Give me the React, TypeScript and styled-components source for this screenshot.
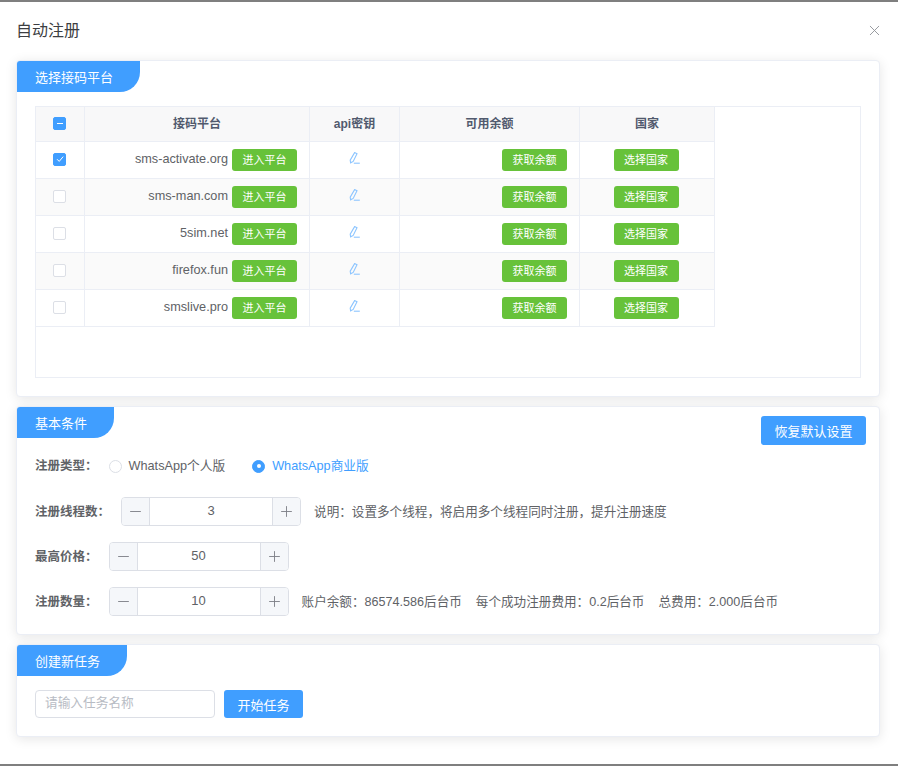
import React from "react";
import styled, { createGlobalStyle } from "styled-components";
import { Minus, Plus, X } from "lucide-react";

const GlobalStyle = createGlobalStyle`
  html, body {
    margin: 0;
    padding: 0;
    background: #fff;
    font-family: "Liberation Sans", "Noto Sans CJK SC", sans-serif;
    color: #606266;
  }
  * {
    box-sizing: border-box;
  }
`;

const Dialog = styled.div`
  width: 898px;
  height: 766px;
  border-top: 2px solid #7f7f7f;
  border-bottom: 2px solid #7f7f7f;
  background: #fff;
  overflow: hidden;
`;

const DialogHeader = styled.div`
  height: 58px;
  padding: 0 15px 4px 16px;
  display: flex;
  align-items: center;
  justify-content: space-between;
`;

const DialogTitle = styled.div`
  font-size: 16px;
  color: #3c3e42;
`;

const CloseButton = styled.div`
  display: flex;
  margin-top: 2px;
  color: #909399;
`;

const Stack = styled.div`
  padding: 0 18px 0 16px;
  display: flex;
  flex-direction: column;
  gap: 9px;
`;

const Card = styled.section<{ $height: number }>`
  height: ${(p) => p.$height}px;
  background: #fff;
  border: 1px solid #ebeef5;
  border-radius: 4px;
  box-shadow: 0 2px 12px 0 rgba(0, 0, 0, 0.1);
`;

const CardHead = styled.div<{ $height: number }>`
  height: ${(p) => p.$height}px;
  display: flex;
  justify-content: space-between;
  align-items: flex-start;
`;

const Tag = styled.div`
  height: 31px;
  padding: 0 27px 0 18px;
  display: flex;
  align-items: center;
  background: #409eff;
  color: #fff;
  font-size: 13px;
  border-radius: 3px 0 20px 0;
`;

const TableBox = styled.div`
  height: 272px;
  margin: 14px 18px 0;
  border: 1px solid #ebeef5;
`;

const Table = styled.table`
  width: 679px;
  table-layout: fixed;
  border-collapse: separate;
  border-spacing: 0;
`;

const Th = styled.th<{ $text?: boolean }>`
  height: 35px;
  padding: 0 0 ${(p) => (p.$text ? 3 : 0)}px;
  background: #f8f8f9;
  border-right: 1px solid #ebeef5;
  border-bottom: 1px solid #ebeef5;
  font-size: 12px;
  font-weight: bold;
  color: #515a6e;
  text-align: center;
`;

const Td = styled.td<{ $align?: string; $alt?: boolean; $right?: number }>`
  height: 37px;
  padding: 0 ${(p) => p.$right ?? 12}px 0 12px;
  background: ${(p) => (p.$alt ? "#fafafa" : "#fff")};
  border-right: 1px solid #ebeef5;
  border-bottom: 1px solid #ebeef5;
  font-size: 12px;
  color: #606266;
  text-align: ${(p) => p.$align || "center"};
  vertical-align: middle;
  white-space: nowrap;
`;

const Check = styled.span<{ $on?: boolean }>`
  display: inline-flex;
  align-items: center;
  justify-content: center;
  width: 13px;
  height: 13px;
  margin: 0 1px 2px 0;
  vertical-align: middle;
  border: 1px solid ${(p) => (p.$on ? "#409eff" : "#dcdfe6")};
  border-radius: 2px;
  background: ${(p) => (p.$on ? "#409eff" : "#fff")};
`;

const Dash = styled.span`
  width: 6px;
  height: 1px;
  background: #fff;
`;

const Site = styled.span`
  font-size: 12.7px;
  margin: 0 4px 3px 0;
  vertical-align: middle;
  display: inline-block;
`;

const GreenButton = styled.span`
  display: inline-block;
  width: 65px;
  height: 22px;
  line-height: 22px;
  background: #67c23a;
  color: #fff;
  border-radius: 3px;
  font-size: 11px;
  text-align: center;
  vertical-align: middle;
`;

const EditIcon = styled.svg`
  display: block;
  margin: 0 auto 4px;
  color: #8cc5ff;
`;

const BlueButton = styled.button<{ $w: number; $h: number }>`
  width: ${(p) => p.$w}px;
  height: ${(p) => p.$h}px;
  padding: 0;
  border: 0;
  border-radius: 3px;
  background: #409eff;
  color: #fff;
  font-family: inherit;
  font-size: 13px;
`;

const ResetWrap = styled.div`
  padding: 9px 13px 0 0;
`;

const FormBody = styled.div`
  padding: 0 18px;
  display: flex;
  flex-direction: column;
  gap: 16px;
`;

const Row = styled.div`
  height: 29px;
  display: flex;
  align-items: center;
  font-size: 12.5px;
`;

const RadioRow = styled(Row)`
  height: 40px;
  margin-bottom: 11px;
`;

const Label = styled.label`
  padding-bottom: 3px;
  font-size: 12.5px;
  font-weight: bold;
  color: #606266;
  margin-right: 11px;
  white-space: nowrap;
`;

const Radio = styled.span<{ $on?: boolean }>`
  display: inline-flex;
  align-items: center;
  gap: 7px;
  margin-right: 27px;
  font-size: 12.7px;
  color: ${(p) => (p.$on ? "#409eff" : "#606266")};
`;

const RadioText = styled.span`
  padding-bottom: 3px;
`;

const RadioDot = styled.span<{ $on?: boolean }>`
  width: 13px;
  height: 13px;
  border-radius: 50%;
  border: 1px solid ${(p) => (p.$on ? "#409eff" : "#dcdfe6")};
  background: ${(p) => (p.$on ? "#409eff" : "#fff")};
  display: flex;
  align-items: center;
  justify-content: center;
  &::after {
    content: "";
    width: 4px;
    height: 4px;
    border-radius: 50%;
    background: #fff;
    display: ${(p) => (p.$on ? "block" : "none")};
  }
`;

const Stepper = styled.div`
  width: 180px;
  height: 29px;
  display: flex;
  border: 1px solid #dcdfe6;
  border-radius: 4px;
  overflow: hidden;
`;

const StepButton = styled.span<{ $side: "left" | "right" }>`
  width: 28px;
  display: flex;
  align-items: center;
  justify-content: center;
  background: #f5f7fa;
  color: #7d8087;
  border-${(p) => (p.$side === "left" ? "right" : "left")}: 1px solid #dcdfe6;
`;

const StepValue = styled.span`
  flex: 1;
  display: flex;
  align-items: center;
  justify-content: center;
  padding-bottom: 2px;
  font-size: 13px;
  color: #606266;
`;

const Note = styled.div`
  margin-left: 13px;
  padding-bottom: 3px;
  display: flex;
  gap: 14px;
  font-size: 12.6px;
  color: #606266;
  white-space: nowrap;
`;

const TaskRow = styled.div`
  margin-top: 14px;
  padding: 0 18px;
  display: flex;
  gap: 9px;
`;

const TaskInput = styled.input`
  width: 180px;
  height: 28px;
  padding: 0 9px 2px;
  border: 1px solid #dcdfe6;
  border-radius: 4px;
  font-family: inherit;
  font-size: 12.7px;
  outline: none;
  &::placeholder {
    color: #b8bcc4;
    opacity: 1;
  }
`;

const platforms = ["sms-activate.org", "sms-man.com", "5sim.net", "firefox.fun", "smslive.pro"];

// full-width punctuation, as in the Chinese copy
const COLON = "\uFF1A";
const COMMA = "\uFF0C";

const Pencil = () => (
  <EditIcon width="12" height="12" viewBox="0 0 12 12" fill="none" stroke="currentColor" strokeWidth="1.1">
    <path d="M5.6 0.6 L8 1.7 L4.2 9.4 L1.6 10.8 L1.2 8.2 Z" />
    <path d="M4.8 11.2 H10.8" />
  </EditIcon>
);

const Tick = () => (
  <svg width="10" height="10" viewBox="0 0 10 10" fill="none" stroke="#fff" strokeWidth="1">
    <path d="M2 5.2 L4.2 7.4 L8.2 2.6" />
  </svg>
);

const NumberInput = ({ value }: { value: number }) => (
  <Stepper>
    <StepButton $side="left">
      <Minus size={17} strokeWidth={1.3} />
    </StepButton>
    <StepValue>{value}</StepValue>
    <StepButton $side="right">
      <Plus size={17} strokeWidth={1.3} />
    </StepButton>
  </Stepper>
);

const App = () => (
  <Dialog>
    <GlobalStyle />
    <DialogHeader>
      <DialogTitle>自动注册</DialogTitle>
      <CloseButton>
        <X size={17} strokeWidth={1.3} />
      </CloseButton>
    </DialogHeader>
    <Stack>
      <Card $height={337}>
        <CardHead $height={31}>
          <Tag>选择接码平台</Tag>
        </CardHead>
        <TableBox>
          <Table>
            <colgroup>
              <col width={49} />
              <col width={225} />
              <col width={90} />
              <col width={180} />
              <col width={135} />
            </colgroup>
            <thead>
              <tr>
                <Th>
                  <Check $on>
                    <Dash />
                  </Check>
                </Th>
                <Th $text>接码平台</Th>
                <Th $text>api密钥</Th>
                <Th $text>可用余额</Th>
                <Th $text>国家</Th>
              </tr>
            </thead>
            <tbody>
              {platforms.map((name, i) => (
                <tr key={name}>
                  <Td $alt={i % 2 === 1}>
                    <Check $on={i === 0}>{i === 0 && <Tick />}</Check>
                  </Td>
                  <Td $alt={i % 2 === 1} $align="right">
                    <Site>{name}</Site>
                    <GreenButton>进入平台</GreenButton>
                  </Td>
                  <Td $alt={i % 2 === 1}>
                    <Pencil />
                  </Td>
                  <Td $alt={i % 2 === 1} $align="right">
                    <GreenButton>获取余额</GreenButton>
                  </Td>
                  <Td $alt={i % 2 === 1} $right={14}>
                    <GreenButton>选择国家</GreenButton>
                  </Td>
                </tr>
              ))}
            </tbody>
          </Table>
        </TableBox>
      </Card>

      <Card $height={229}>
        <CardHead $height={39}>
          <Tag>基本条件</Tag>
          <ResetWrap>
            <BlueButton $w={105} $h={29}>恢复默认设置</BlueButton>
          </ResetWrap>
        </CardHead>
        <FormBody>
          <RadioRow>
            <Label>注册类型{COLON}</Label>
            <Radio>
              <RadioDot />
              <RadioText>WhatsApp个人版</RadioText>
            </Radio>
            <Radio $on>
              <RadioDot $on />
              <RadioText>WhatsApp商业版</RadioText>
            </Radio>
          </RadioRow>
        </FormBody>
        <FormBody>
          <Row>
            <Label>注册线程数{COLON}</Label>
            <NumberInput value={3} />
            <Note>
              说明{COLON}设置多个线程{COMMA}将启用多个线程同时注册{COMMA}提升注册速度
            </Note>
          </Row>
          <Row>
            <Label>最高价格{COLON}</Label>
            <NumberInput value={50} />
          </Row>
          <Row>
            <Label>注册数量{COLON}</Label>
            <NumberInput value={10} />
            <Note>
              <span>账户余额{COLON}86574.586后台币</span>
              <span>每个成功注册费用{COLON}0.2后台币</span>
              <span>总费用{COLON}2.000后台币</span>
            </Note>
          </Row>
        </FormBody>
      </Card>

      <Card $height={93}>
        <CardHead $height={31}>
          <Tag>创建新任务</Tag>
        </CardHead>
        <TaskRow>
          <TaskInput placeholder="请输入任务名称" />
          <BlueButton $w={79} $h={28}>开始任务</BlueButton>
        </TaskRow>
      </Card>
    </Stack>
  </Dialog>
);

export default App;
